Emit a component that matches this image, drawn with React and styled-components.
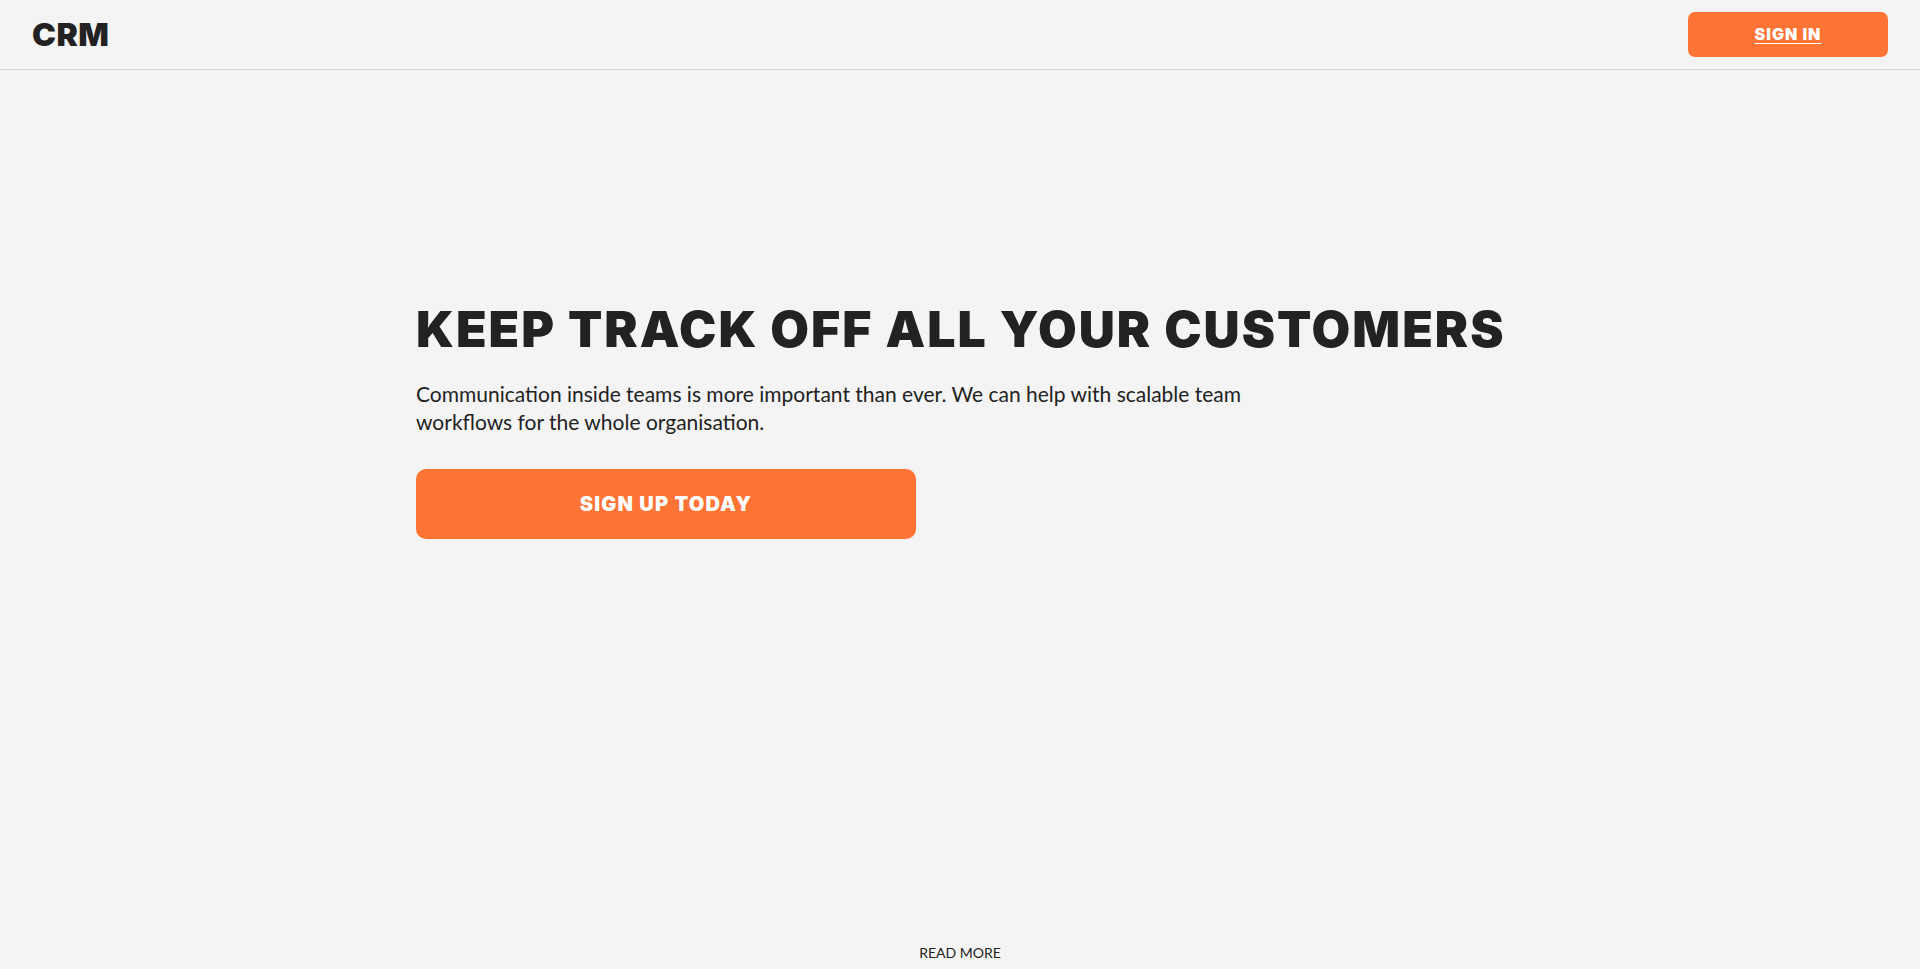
import React from 'react';
import styled, { createGlobalStyle } from 'styled-components';

const GlobalStyle = createGlobalStyle`
  * {
    box-sizing: border-box;
  }

  body {
    margin: 0;
    background: #f4f4f4;
    color: #222222;
    font-family: 'Lato', 'Open Sans', sans-serif;
  }
`;

const App = () => {
  return (
    <>
      <GlobalStyle />
      <Page>
        <Header>
          <Logo>CRM</Logo>
          <SignIn href="#">SIGN IN</SignIn>
        </Header>

        <Main>
          <Hero>
            <Title>KEEP TRACK OFF ALL YOUR CUSTOMERS</Title>
            <Lead>
              Communication inside teams is more important than ever. We can help with scalable team
              workflows for the whole organisation.
            </Lead>
            <CallToAction>SIGN UP TODAY</CallToAction>
          </Hero>
          <ReadMore>READ MORE</ReadMore>
        </Main>
      </Page>
    </>
  );
};

export default App;

// ==========================
// Styled Components
// ==========================

const Page = styled.div`
  height: 100vh;
  overflow: hidden;
  display: flex;
  flex-direction: column;
`;

const Header = styled.header`
  height: 70px;
  flex-shrink: 0;
  padding: 0 32px;
  display: flex;
  align-items: center;
  justify-content: space-between;
  border-bottom: 1px solid #d6d6d6;
`;

const Logo = styled.div`
  font-family: 'Inter', sans-serif;
  font-weight: 900;
  font-size: 32px;
  letter-spacing: 0.5px;
  color: #222222;
  margin-top: -1px;
`;

const SignIn = styled.a`
  width: 200px;
  height: 45px;
  margin-top: -1px;
  border-radius: 7px;
  background: #ff7335;
  color: #ffffff;
  display: flex;
  align-items: center;
  justify-content: center;
  font-family: 'Inter', sans-serif;
  font-weight: 900;
  font-size: 16px;
  letter-spacing: 1px;
  text-decoration: underline;
  text-underline-offset: 3px;
`;

const Main = styled.main`
  flex: 1;
  display: flex;
  flex-direction: column;
`;

const Hero = styled.section`
  flex: 1;
  width: 100%;
  max-width: 1088px;
  margin: 0 auto;
  padding-top: 229px;
  display: flex;
  flex-direction: column;
  align-items: flex-start;
`;

const Title = styled.h1`
  margin: 0;
  font-family: 'Inter', sans-serif;
  font-weight: 900;
  font-size: 50px;
  line-height: 60px;
  letter-spacing: 2px;
  color: #222222;
  white-space: nowrap;
`;

const Lead = styled.p`
  margin: 21px 0 0;
  max-width: 850px;
  font-family: 'Lato', sans-serif;
  font-size: 21px;
  line-height: 28px;
  color: #222222;
`;

const CallToAction = styled.button`
  margin-top: 33px;
  width: 500px;
  height: 70px;
  border: none;
  border-radius: 10px;
  background: #ff7335;
  color: #ffffff;
  font-family: 'Inter', sans-serif;
  font-weight: 900;
  font-size: 20px;
  letter-spacing: 1.2px;
  cursor: pointer;
`;

const ReadMore = styled.div`
  text-align: center;
  padding-bottom: 8px;
  font-family: 'Lato', sans-serif;
  font-size: 14px;
  color: #222222;
`;
